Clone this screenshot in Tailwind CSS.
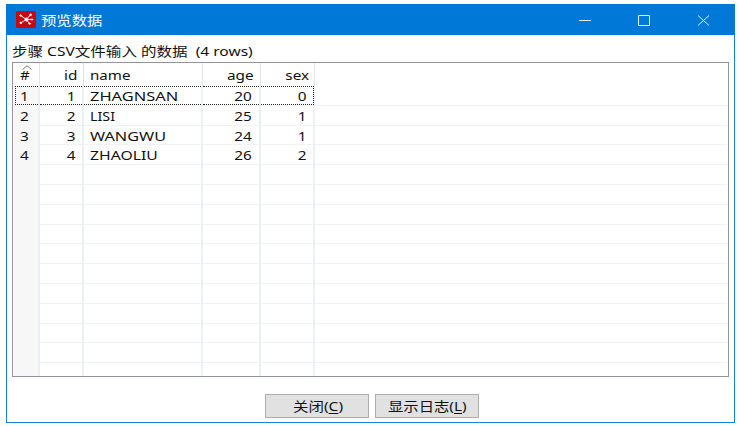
<!DOCTYPE html>
<html lang="zh">
<head>
<meta charset="utf-8">
<title>预览数据</title>
<script src="https://cdn.jsdelivr.net/npm/@tailwindcss/browser@4"></script>
</head>
<body class="h-[427px] w-[738px] overflow-hidden bg-white pt-1 pl-1.5 font-['Noto_Sans','Noto_Sans_CJK_SC',sans-serif] text-[13px] leading-5 text-[#111]">
<main class="flex h-[419px] w-[729px] flex-col border border-t-0 border-[#1683d9] bg-white">
  <header class="-mx-px flex h-[31px] shrink-0 items-center bg-[#0078d7] pl-[10px] text-white">
    <svg class="h-[17px] w-5" viewBox="0 0 20 17">
      <rect width="20" height="17" rx="1.5" fill="#c9070f"/>
      <g stroke="#fff" stroke-width="1" stroke-linecap="round" fill="#fff">
        <path d="M10.5 8.5 4.5 4.5M10.5 8.5 14.5 3.8M10.5 8.5 4.8 11.8M10.5 8.5 13.5 12.7M10.5 8.5H16"/>
        <circle cx="10.5" cy="8.5" r="1.5"/><circle cx="4.5" cy="4.5" r=".7"/><circle cx="14.5" cy="3.8" r=".8"/><circle cx="4.8" cy="11.8" r=".8"/><circle cx="13.5" cy="12.7" r=".7"/><circle cx="16" cy="8.5" r=".7"/>
      </g>
    </svg>
    <h1 class="ml-[5px] w-[62px] whitespace-nowrap"><span class="inline-block origin-left scale-x-[1.18]">预览数据</span></h1>
    <svg class="ml-auto mr-[24px] h-[14px] w-[132px]" viewBox="0 0 132 14" fill="none" stroke="#e4f1fb" stroke-width="1">
      <path d="M0 7.5H12"/><path d="M59.5 2.5H70.5V12.5H59.5Z"/><path d="M119 2.5 130 12.5M130 2.5 119 12.5"/>
    </svg>
  </header>
  <p class="mt-[6px] ml-[5px] h-[21px] shrink-0 whitespace-pre"><span class="inline-block origin-left scale-x-[1.195]">步骤 CSV文件输入 的数据  (4 rows)</span></p>
  <section class="ml-[5px] flex h-[315px] w-[717px] shrink-0 flex-col overflow-hidden border border-[#92959d] bg-white px-px">
    <div class="grid h-[23px] shrink-0 grid-cols-[26px_44px_119px_58px_54px] items-stretch leading-[25px]">
      <div class="relative border-r border-[#e5e5e5] pl-[6px]"><svg class="absolute top-[2px] left-[8px] h-[5px] w-[10px]" viewBox="0 0 10 5" fill="none" stroke="#777"><path d="M.5 4.5 5 .8 9.5 4.5"/></svg><span class="inline-block origin-left scale-x-[1.15]">#</span></div>
      <div class="border-r border-[#e5e5e5] pr-[6px] text-right"><span class="inline-block origin-right scale-x-[1.18]">id</span></div>
      <div class="border-r border-[#e5e5e5] pl-[6px]"><span class="inline-block origin-left scale-x-[1.16]">name</span></div>
      <div class="border-r border-[#e5e5e5] pr-[6px] text-right"><span class="inline-block origin-right scale-x-[1.18]">age</span></div>
      <div class="border-r border-[#e5e5e5] pr-[5px] text-right"><span class="inline-block origin-right scale-x-[1.18]">sex</span></div>
    </div>
    <div id="rows"></div>
  </section>
  <footer class="mt-[17px] ml-[258px] flex gap-[6px] whitespace-nowrap">
    <button class="h-6 w-[104px] border border-[#adadad] bg-[#e1e1e1] pl-[3px] leading-[22px]"><span class="inline-block scale-x-[1.19]">关闭(<u class="underline-offset-2">C</u>)</span></button>
    <button class="h-6 w-[104px] border border-[#adadad] bg-[#e1e1e1] leading-[22px]"><span class="inline-block scale-x-[1.18]">显示日志(<u class="underline-offset-2">L</u>)</span></button>
  </footer>
</main>
<script>
const data = [['1','1','ZHAGNSAN','20','0'],['2','2','LISI','25','1'],['3','3','WANGWU','24','1'],['4','4','ZHAOLIU','26','2']];
const cell = ['bg-[#f7f7f7] pl-[6px]','pr-[7px] text-right','pl-[6px]','pr-[7px] text-right','pr-[7px] text-right'];
const origin = ['origin-left','origin-right','origin-left','origin-right','origin-right'];
const nameScale = ['scale-x-[1.265]','scale-x-[1.1]','scale-x-[1.25]','scale-x-[1.21]'];
const focusEdge = ['left-px right-0 border-l','inset-x-0','inset-x-0','inset-x-0','left-0 -right-px border-r'];
document.getElementById('rows').innerHTML = Array.from({length:15}, (_, r) => {
  const row = data[r] || ['','','','',''];
  return '<div class="grid h-[19.8px] grid-cols-[26px_44px_119px_58px_54px] border-b border-[#f1f2f3] leading-[20px]">' + row.map((t, i) => {
    const focus = r === 0 ? '<div class="absolute top-0 h-[19px] border-y border-dotted border-[#222] ' + focusEdge[i] + '"></div>' : '';
    const scale = i === 2 && nameScale[r] ? nameScale[r] : 'scale-x-[1.18]';
    return '<div class="relative border-r-2 border-[#eaf0f7] ' + cell[i] + '"><span class="inline-block ' + scale + ' ' + origin[i] + '">' + t + '</span>' + focus + '</div>';
  }).join('') + '</div>';
}).join('');
</script>
</body>
</html>
